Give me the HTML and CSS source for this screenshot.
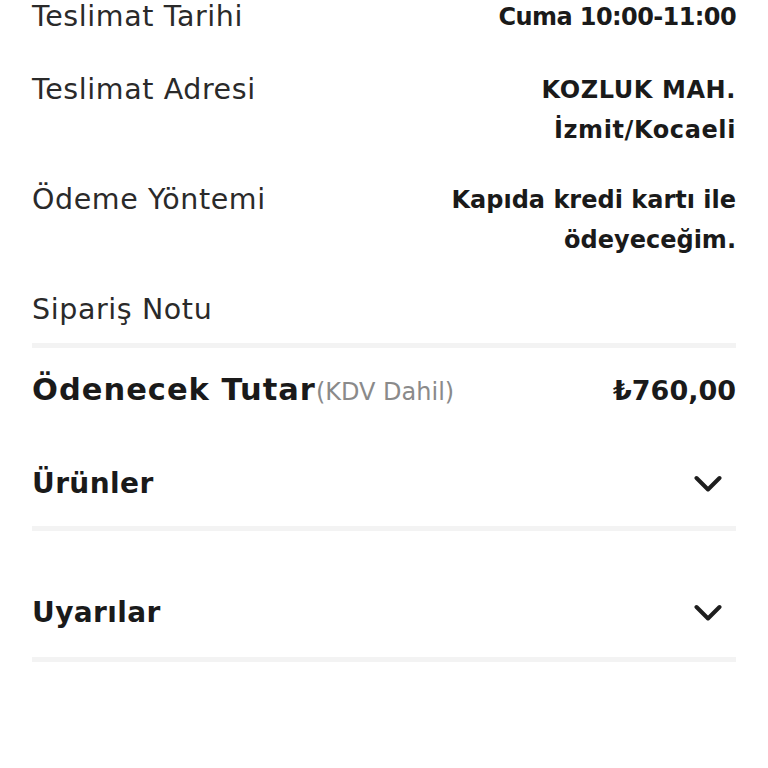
FILE: index.html
```html
<!DOCTYPE html>
<html lang="tr">
<head>
<meta charset="utf-8">
<title>Sipariş Özeti</title>
<link rel="stylesheet" href="styles.css">
</head>
<body>
<div class="page">
  <div class="info">
    <div class="row row-first">
      <span class="label">Teslimat Tarihi</span>
      <span class="value value-time">Cuma 10:00-11:00</span>
    </div>
    <div class="row">
      <span class="label">Teslimat Adresi</span>
      <span class="value value-wide">KOZLUK MAH.<br>İzmit/Kocaeli</span>
    </div>
    <div class="row">
      <span class="label">Ödeme Yöntemi</span>
      <span class="value">Kapıda kredi kartı ile<br>ödeyeceğim.</span>
    </div>
    <div class="row row-last">
      <span class="label">Sipariş Notu</span>
      <span class="value"></span>
    </div>
  </div>
  <div class="divider"></div>
  <div class="total">
    <span class="total-label">Ödenecek Tutar<span class="vat">(KDV Dahil)</span></span>
    <span class="total-value">₺760,00</span>
  </div>
  <div class="acc acc-first">
    <span class="acc-title">Ürünler</span>
    <svg class="chev" width="28" height="18" viewBox="0 0 28 18"><polyline points="2.5,3 14,14.5 25.5,3" fill="none" stroke="#1e1e1e" stroke-width="4" stroke-linecap="round" stroke-linejoin="round"/></svg>
  </div>
  <div class="divider"></div>
  <div class="acc">
    <span class="acc-title">Uyarılar</span>
    <svg class="chev" width="28" height="18" viewBox="0 0 28 18"><polyline points="2.5,3 14,14.5 25.5,3" fill="none" stroke="#1e1e1e" stroke-width="4" stroke-linecap="round" stroke-linejoin="round"/></svg>
  </div>
  <div class="divider"></div>
</div>
</body>
</html>
```

FILE: styles.css
```css
html, body {
  margin: 0;
  padding: 0;
  background: #ffffff;
}

body {
  font-family: "DejaVu Sans", "Noto Sans", sans-serif;
  color: #1c1c1c;
  overflow: hidden;
}

.page {
  padding: 0 32px;
}

.info {
  margin-top: -18px;
}

.row {
  display: flex;
  justify-content: space-between;
  align-items: flex-start;
  padding: 15px 0;
  line-height: 40px;
}

.row-first {
  padding-bottom: 18px;
}

.row-last {
  padding-bottom: 13px;
}

.label {
  font-size: 28.5px;
  letter-spacing: 0.6px;
  color: #2a2a2a;
  white-space: nowrap;
}

.value {
  font-size: 24px;
  font-weight: bold;
  text-align: right;
  color: #1a1a1a;
  white-space: nowrap;
}

.value-time {
  letter-spacing: -0.6px;
}

.value-wide {
  letter-spacing: 0.6px;
}

.divider {
  height: 5px;
  background: #f3f3f3;
}

.total {
  display: flex;
  justify-content: space-between;
  align-items: baseline;
  padding-top: 22px;
  line-height: 40px;
}

.total-label {
  font-size: 30.5px;
  font-weight: bold;
  letter-spacing: 1px;
  color: #1a1a1a;
}

.vat {
  font-size: 24px;
  font-weight: normal;
  letter-spacing: 0;
  color: #8a8a8a;
}

.total-value {
  font-size: 27px;
  font-weight: bold;
  color: #1a1a1a;
}

.acc {
  display: flex;
  justify-content: space-between;
  align-items: center;
  padding: 62px 0 24px;
  line-height: 40px;
}

.acc-first {
  padding-top: 52px;
  padding-bottom: 22px;
}

.acc-title {
  font-size: 28px;
  font-weight: bold;
  letter-spacing: 0.4px;
  color: #1a1a1a;
}

.chev {
  display: block;
  margin-right: 14px;
}
```
